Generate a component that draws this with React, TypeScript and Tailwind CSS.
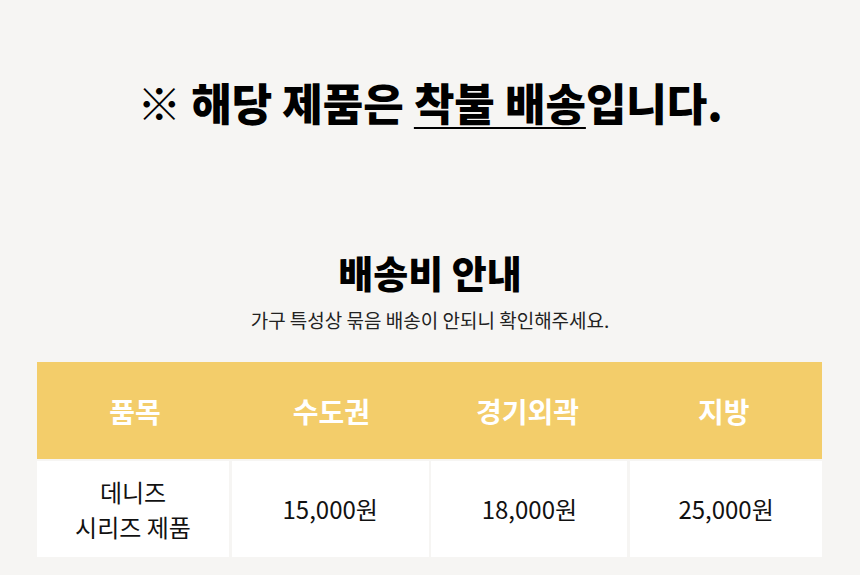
export default function App() {
  const headers = ["품목", "수도권", "경기외곽", "지방"];
  const prices = ["15,000원", "18,000원", "25,000원"];

  return (
    <div className="w-[860px] h-[575px] bg-[#f6f5f3] font-['Noto_Sans_CJK_KR','Noto_Sans',sans-serif] text-black overflow-hidden">
      {/* Notice */}
      <div className="pt-[72px] flex justify-center">
        <h1 className="text-[44px] leading-[60px] font-black">
          ※ 해당 제품은 <span className="underline decoration-2 underline-offset-[6px]">착불 배송</span>입니다.
        </h1>
      </div>

      {/* Shipping info */}
      <div className="mt-[118px] flex flex-col items-center">
        <h2 className="text-[38px] leading-[44px] font-extrabold">배송비 안내</h2>
        <p className="mt-[13px] text-[19px] leading-[26px] text-[#222]">
          가구 특성상 묶음 배송이 안되니 확인해주세요.
        </p>
      </div>

      {/* Table */}
      <div className="mx-[37px] mt-[29px] w-[785px]">
        <div className="grid grid-cols-4 h-[97px] bg-[#f3cd6a]">
          {headers.map((h) => (
            <div key={h} className="flex items-center justify-center text-white text-[28px] font-bold">
              {h}
            </div>
          ))}
        </div>
        <div className="mt-[2px] grid grid-cols-[192px_197px_196px_192px] gap-x-[2.7px] h-[96px]">
          <div className="bg-white flex items-center justify-center text-center text-[24px] leading-[35px] text-[#111]">
            데니즈
            <br />
            시리즈 제품
          </div>
          {prices.map((p) => (
            <div key={p} className="bg-white flex items-center justify-center text-[24px] text-[#111]">
              {p}
            </div>
          ))}
        </div>
      </div>
    </div>
  );
}
